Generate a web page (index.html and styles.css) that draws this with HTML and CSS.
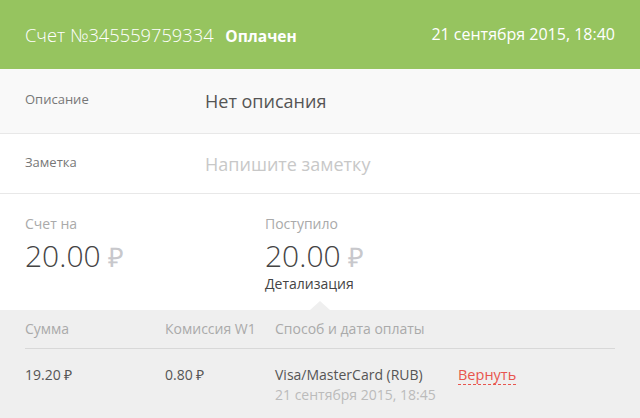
FILE: index.html
```html
<!DOCTYPE html>
<html lang="ru">
  <head>
    <meta charset="UTF-8" />
    <title>Счет №345559759334</title>
    <link rel="stylesheet" href="styles.css">
  </head>
  <body>
    <div class="invoice">
      <div class="invoice-header">
        <div class="invoice-title">
          Счет №345559759334 <span class="status">Оплачен</span>
        </div>
        <div class="invoice-date">21 сентября 2015, 18:40</div>
      </div>

      <div class="info-row info-row-grey">
        <div class="info-label">Описание</div>
        <div class="info-value">Нет описания</div>
      </div>
      <div class="info-row">
        <div class="info-label">Заметка</div>
        <div class="info-value placeholder">Напишите заметку</div>
      </div>

      <div class="amounts">
        <div class="amount amount-first">
          <div class="amount-label">Счет на</div>
          <div class="amount-value">20.00 <span class="rub">₽</span></div>
        </div>
        <div class="amount">
          <div class="amount-label">Поступило</div>
          <div class="amount-value">20.00 <span class="rub">₽</span></div>
          <div class="details-link">Детализация</div>
        </div>
      </div>

      <div class="payments">
        <div class="payments-head">
          <div class="col-sum">Сумма</div>
          <div class="col-fee">Комиссия W1</div>
          <div class="col-method">Способ и дата оплаты</div>
        </div>
        <div class="payments-row">
          <div class="col-sum">19.20 ₽</div>
          <div class="col-fee">0.80 ₽</div>
          <div class="col-method">
            <div>Visa/MasterCard (RUB)</div>
            <div class="pay-date">21 сентября 2015, 18:45</div>
          </div>
          <div class="col-action"><span class="refund">Вернуть</span></div>
        </div>
      </div>
    </div>
  </body>
</html>
```

FILE: styles.css
```css
body {
  margin: 0;
  font-family: "Open Sans", Arial, sans-serif;
  background-color: #fff;
  color: #444;
}
.invoice {
  width: 640px;
  height: 418px;
  overflow: hidden;
}
.invoice-header {
  display: flex;
  justify-content: space-between;
  align-items: center;
  height: 69px;
  padding: 0 25px;
  background-color: #96c45f;
  color: #fff;
}
.invoice-title {
  font-size: 18.3px;
  font-weight: 300;
  padding-bottom: 1px;
}
.status {
  font-size: 15.5px;
  font-weight: 700;
  margin-left: 7px;
}
.invoice-date {
  font-size: 16px;
  padding-bottom: 1px;
}
.info-row {
  display: flex;
  align-items: center;
  height: 59px;
  padding: 0 25px;
  border-bottom: 1px solid #e8e8e8;
}
.info-row-grey {
  height: 64px;
  background-color: #f9f9f9;
}
.info-label {
  width: 180px;
  font-size: 13px;
  color: #777;
  margin-top: -4px;
}
.info-value {
  font-size: 18px;
  color: #555;
}
.info-value.placeholder {
  color: #c8c8c8;
}
.amounts {
  display: flex;
  height: 96px;
  padding: 20px 25px 0;
  position: relative;
}
.amount-first {
  width: 240px;
}
.amount-label {
  font-size: 14px;
  color: #aaa;
  line-height: 20px;
}
.amount-value {
  font-size: 30px;
  font-weight: 300;
  color: #444;
  line-height: 38px;
  margin-top: 3px;
}
.rub {
  color: #c8c8cc;
  font-size: 27px;
}
.details-link {
  font-size: 14px;
  color: #444;
  line-height: 20px;
  margin-top: -2px;
}
/* small pointer above the payments block */
.amounts::after {
  content: "";
  position: absolute;
  left: 310px;
  bottom: 0;
  border-left: 10px solid transparent;
  border-right: 10px solid transparent;
  border-bottom: 9px solid #efefef;
}
.payments {
  background-color: #efefef;
  padding: 0 25px;
  height: 108px;
  font-size: 14px;
}
.payments-head {
  display: flex;
  height: 39px;
  align-items: center;
  color: #aaa;
  border-bottom: 1px solid #d8d8d8;
  padding-bottom: 1px;
  box-sizing: border-box;
}
.payments-row {
  display: flex;
  padding-top: 16px;
  color: #555;
  line-height: 20px;
}
.col-sum {
  width: 140px;
}
.col-fee {
  width: 110px;
}
.col-method {
  width: 183px;
}
.pay-date {
  color: #bbb;
}
.refund {
  font-size: 14.5px;
  color: #e8554e;
  border-bottom: 1px dashed #e8554e;
}
```
